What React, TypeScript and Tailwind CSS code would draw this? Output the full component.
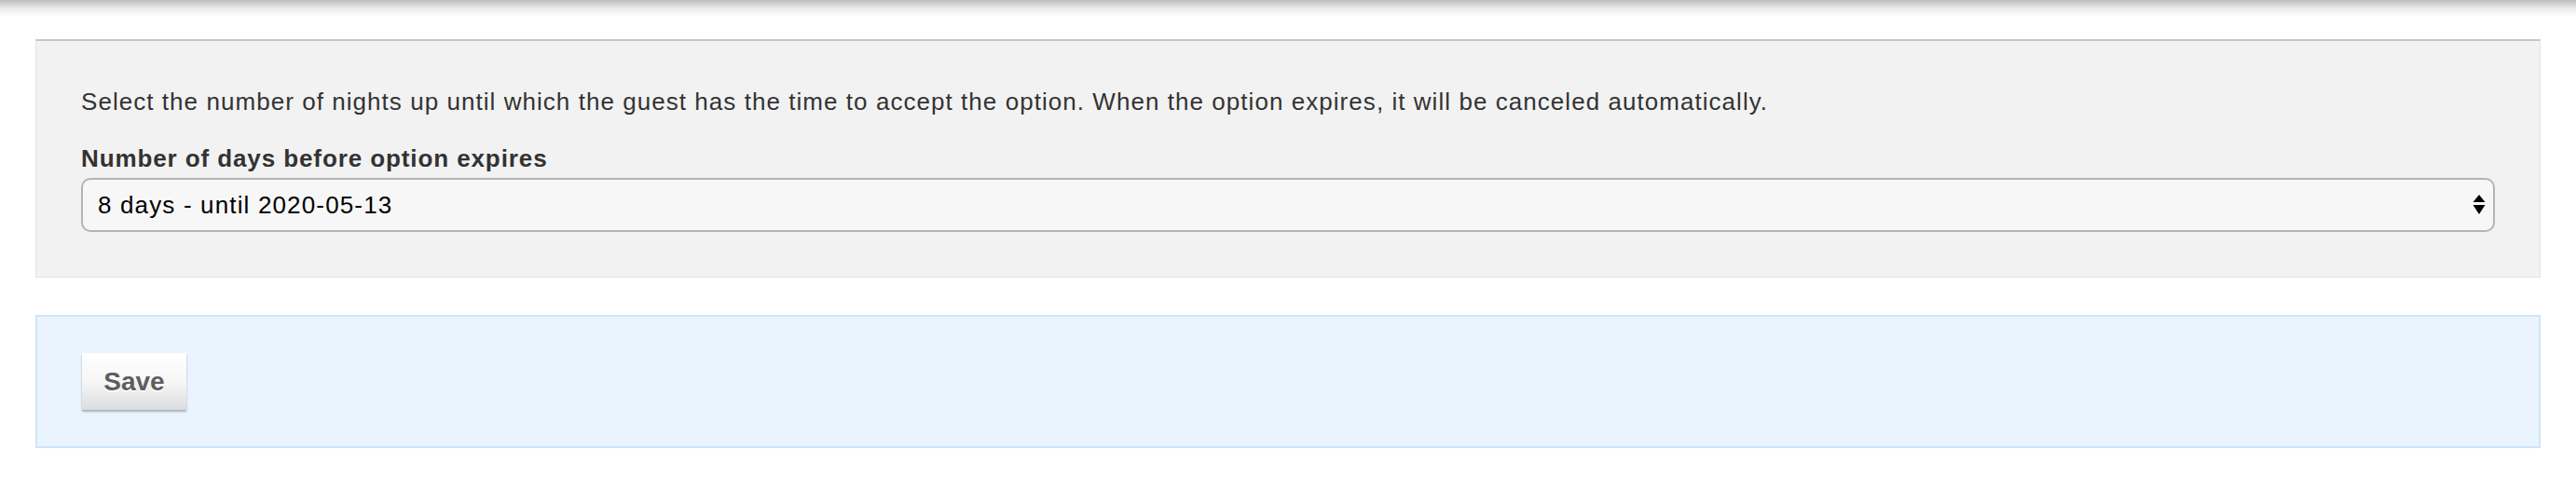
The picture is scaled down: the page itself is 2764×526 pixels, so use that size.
import { useState } from "react";

const expiryOptions = [
  { value: "1", label: "1 day - until 2020-05-06" },
  { value: "3", label: "3 days - until 2020-05-08" },
  { value: "8", label: "8 days - until 2020-05-13" },
  { value: "14", label: "14 days - until 2020-05-19" },
];

function SelectArrows() {
  return (
    <svg width="14" height="22" viewBox="0 0 14 22" className="pointer-events-none absolute right-[10px] top-1/2 -translate-y-1/2">
      <path d="M7 0 L13.5 8 L0.5 8 Z" fill="#000" />
      <path d="M0.5 11 L13.5 11 L7 21 Z" fill="#000" />
    </svg>
  );
}

export default function App() {
  const [days, setDays] = useState("8");

  return (
    <div className="min-h-[526px] bg-white font-['Liberation_Sans',Arial,sans-serif]">
      <div className="h-[18px] bg-gradient-to-b from-[#bdbdbd] via-[#ebebeb] to-white" />

      <div className="mx-[38px] mt-[24px] border border-t-2 border-[#e4e4e4] border-t-[#c6c6c6] bg-[#f2f2f2] px-[48px] pb-[48px] pt-[47px]">
        <p className="text-[26px] leading-[36px] tracking-[1.05px] text-[#333]">
          Select the number of nights up until which the guest has the time to accept the option. When the option expires,
          it will be canceled automatically.
        </p>

        <label
          htmlFor="option-expiry"
          className="mt-[25px] block text-[26px] font-bold leading-[36px] tracking-[0.9px] text-[#333]"
        >
          Number of days before option expires
        </label>
        <div className="relative mt-[3px]">
          <select
            id="option-expiry"
            value={days}
            onChange={(event) => setDays(event.target.value)}
            className="block h-[58px] w-full appearance-none rounded-[10px] border-2 border-[#b4b4b4] bg-[#f7f7f7] pl-[16px] pr-[40px] text-[26px] tracking-[1.15px] text-black outline-none"
          >
            {expiryOptions.map((option) => (
              <option key={option.value} value={option.value}>
                {option.label}
              </option>
            ))}
          </select>
          <SelectArrows />
        </div>
      </div>

      <div className="mx-[38px] mt-[40px] border-2 border-[#cde5fb] bg-[#eaf4fe] px-[48px] py-[39px]">
        <button
          type="button"
          className="h-[61px] w-[112px] bg-gradient-to-b from-white via-[#f6f6f6] to-[#dcdddf] text-[28px] font-bold text-[#5e5e5e] shadow-[0_2px_2px_rgba(0,0,0,0.28)] [text-shadow:0_2px_0_#fff]"
        >
          Save
        </button>
      </div>
    </div>
  );
}
